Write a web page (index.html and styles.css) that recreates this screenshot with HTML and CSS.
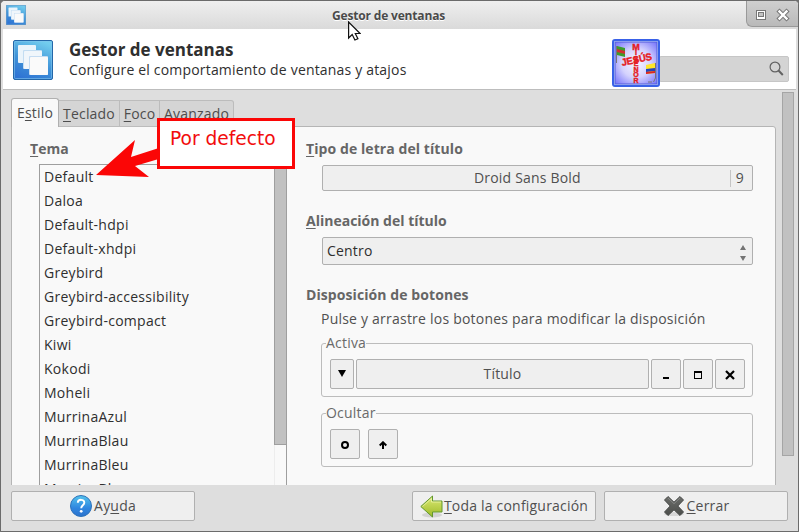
FILE: index.html
```
<!DOCTYPE html>
<html lang="es">
<head>
<meta charset="utf-8">
<title>Gestor de ventanas</title>
<link rel="stylesheet" href="styles.css">
</head>
<body>
<svg width="0" height="0" class="defs" aria-hidden="true">
  <defs>
    <linearGradient id="blue" x1="0.7" y1="0" x2="0.3" y2="1"><stop offset="0" stop-color="#72cdee"/><stop offset=".55" stop-color="#3f93d8"/><stop offset="1" stop-color="#2f74d4"/></linearGradient>
    <linearGradient id="green" x1="0" y1="0" x2="0" y2="1"><stop offset="0" stop-color="#dcea75"/><stop offset="1" stop-color="#9dba28"/></linearGradient>
    <linearGradient id="help" x1="0" y1="0" x2="0" y2="1"><stop offset="0" stop-color="#55c4ec"/><stop offset=".6" stop-color="#2f86e0"/><stop offset="1" stop-color="#2c72cc"/></linearGradient>
    <linearGradient id="grey" x1="0" y1="0" x2="0" y2="1"><stop offset="0" stop-color="#6c6e6b"/><stop offset="1" stop-color="#4b4d4a"/></linearGradient>
    <radialGradient id="badge" r=".7"><stop offset="0" stop-color="#f8f6ff"/><stop offset=".5" stop-color="#d4d2fd"/><stop offset="1" stop-color="#7471fb"/></radialGradient>
    <symbol id="windows" viewBox="0 0 40 40">
      <rect x=".5" y=".5" width="39" height="39" rx="1.5" fill="url(#blue)" stroke="#2467a8"/>
      <rect x="1.5" y="1.5" width="37" height="37" rx="1" fill="none" stroke="#7fc4ec" stroke-opacity=".6"/>
      <rect x="5" y="5" width="18" height="18" rx="1" fill="#eaf4fb"/>
      <rect x="10" y="10" width="19" height="19" rx="1" fill="#c3ddf2"/>
      <rect x="11" y="11" width="18" height="18" rx="1" fill="#f0f6fb"/>
      <rect x="16" y="16" width="19" height="19" rx="1" fill="#c5dcf2"/>
      <rect x="17" y="17" width="18" height="18" rx="1" fill="#fafafa"/>
    </symbol>
  </defs>
</svg>
<div class="window">
  <header class="titlebar">
    <svg class="app-icon" width="20" height="20"><use href="#windows"/></svg>
    <span class="window-title">Gestor de ventanas</span>
    <div class="window-controls">
      <svg width="53" height="27" viewBox="0 0 53 27">
        <rect x="12.500" y="10.500" width="9" height="9" fill="#fff" stroke="#777"/>
        <rect x="14.500" y="12.500" width="5" height="4" fill="#c4c4c4" stroke="#777"/>
        <path d="M35.500 11.500l7 7M42.500 11.500l-7 7" stroke="#777" stroke-width="4.400" stroke-linecap="square"/>
        <path d="M35.500 11.500l7 7M42.500 11.500l-7 7" stroke="#fff" stroke-width="2.400" stroke-linecap="square"/>
      </svg>
    </div>
  </header>

  <section class="banner">
    <svg class="banner-icon" width="40" height="40"><use href="#windows"/></svg>
    <div class="banner-text">
      <h1>Gestor de ventanas</h1>
      <p>Configure el comportamiento de ventanas y atajos</p>
    </div>
    <div class="search">
      <svg width="16" height="16" viewBox="0 0 16 16" fill="none" stroke="#626262"><circle cx="7" cy="6" r="4.900" stroke-width="1.200"/><path d="M10.500 9.500l4.300 4.500" stroke-width="2"/></svg>
    </div>
    <svg class="badge" width="48" height="48" viewBox="0 0 48 48">
      <rect x="1" y="1" width="46" height="46" rx="2" fill="#c5d8ff" stroke="#3961e8" stroke-width="2"/>
      <rect x="3" y="3" width="42" height="42" fill="url(#badge)" stroke="#555fd8"/>
      <path d="M4.500 7v17" stroke="#777"/><path d="M5 7l8 2v9l-8-2z" fill="#3d9b2c"/><path d="M5 10l8 2v3l-8-2z" fill="#cf3030"/>
      <path d="M43.500 24v15l-2 4M36 43h4" stroke="#777" fill="none"/><path d="M34 26l9-2v10l-9 1z" fill="#ffe629"/><path d="M34 30l9-1v3l-9 1z" fill="#2444ba"/><path d="M34 33l9-1v2l-9 1z" fill="#dc2525"/>
      <g class="badge-letters">
        <text class="badge-initial" x="24" y="10.500">M</text><text x="24" y="16">I</text><text x="24" y="21.500">S</text><text x="24" y="27">E</text><text x="24" y="32.500">N</text><text x="24" y="38">O</text><text x="24" y="43.500">R</text>
        <text class="badge-name" x="24.500" y="24" transform="rotate(-12 24 20)" textLength="31" lengthAdjust="spacingAndGlyphs">JESÚS</text>
      </g>
    </svg>
  </section>

  <main class="content">
    <div class="notebook">
      <nav class="tabs">
        <span class="tab active">E<u>s</u>tilo</span>
        <span class="tab keyboard"><u>T</u>eclado</span>
        <span class="tab focus"><u>F</u>oco</span>
        <span class="tab advanced"><u>A</u>vanzado</span>
      </nav>
      <div class="page">
        <section class="themes">
          <h2 class="theme-heading"><u>T</u>ema</h2>
          <div class="list-box">
            <ul>
              <li>Default</li><li>Daloa</li><li>Default-hdpi</li><li>Default-xhdpi</li><li>Greybird</li><li>Greybird-accessibility</li><li>Greybird-compact</li><li>Kiwi</li><li>Kokodi</li><li>Moheli</li><li>MurrinaAzul</li><li>MurrinaBlau</li><li>MurrinaBleu</li><li>MurrinaBlue</li>
            </ul>
            <div class="list-scroll"><div class="list-thumb"></div></div>
          </div>
        </section>
        <section class="options">
          <h2><u>T</u>ipo de letra del título</h2>
          <div class="font-button"><span class="font-name">Droid Sans Bold</span><span class="font-size">9</span></div>
          <h2 class="align-heading"><u>A</u>lineación del título</h2>
          <div class="combo"><span>Centro</span>
            <svg width="6" height="16" viewBox="0 0 6 16" fill="#747474"><path d="M0 5L3 0l3 5zM0 11h6l-3 5z"/></svg>
          </div>
          <h2 class="layout-heading">Disposición de botones</h2>
          <p class="hint">Pulse y arrastre los botones para modificar la disposición</p>
          <div class="frame">
            <span class="legend active-legend">Activa</span>
            <div class="button-row">
              <span class="tile menu-tile"><svg width="8" height="7" viewBox="0 0 8 7"><path d="M0 0h8L4 7z"/></svg></span>
              <span class="tile title-tile">Título</span>
              <span class="tile"><svg width="10" height="10" viewBox="0 0 10 10"><path d="M2 7h6v2H2z"/></svg></span>
              <span class="tile"><svg width="8" height="8" viewBox="0 0 8 8"><path d="M0 0h8v8H0zM1 2v5h6V2z" fill-rule="evenodd"/></svg></span>
              <span class="tile"><svg width="10" height="10" viewBox="0 0 10 10"><path d="M1 1l8 8M9 1L1 9" stroke="#000" stroke-width="2.200"/></svg></span>
            </div>
          </div>
          <div class="frame">
            <span class="legend hidden-legend">Ocultar</span>
            <div class="button-row hidden-row">
              <span class="tile"><svg width="8" height="8" viewBox="0 0 8 8"><circle cx="4" cy="4" r="3" fill="none" stroke="#000" stroke-width="2"/></svg></span>
              <span class="tile"><svg width="8" height="8" viewBox="0 0 8 8"><path d="M4 8V1.500M.700 4.500L4 1.300l3.300 3.200" fill="none" stroke="#000" stroke-width="2"/></svg></span>
            </div>
          </div>
        </section>
      </div>
    </div>
    <div class="page-scroll"><div class="page-thumb"></div></div>
  </main>

  <footer class="actions">
    <span class="action help">
      <svg width="22" height="22" viewBox="0 0 22 22"><circle cx="11" cy="11" r="10.500" fill="url(#help)" stroke="#2d72ba"/><path d="M7.800 7.700C8 3.800 14.400 3.900 14.300 7.800 14.200 10.400 11.200 10.300 11.200 13.300" fill="none" stroke="#fff" stroke-width="1.900"/><circle cx="11.200" cy="16.300" r="1.400" fill="#fff"/></svg>
      <span>Ay<u>u</u>da</span>
    </span>
    <span class="action all-settings">
      <svg width="23" height="23" viewBox="0 0 23 23"><ellipse cx="12" cy="20" rx="10" ry="2.500" fill="#d3d3d3"/><path d="M.8 11.500L12.500 1v5H22v11h-9.500v5z" fill="url(#green)" stroke="#62982f" stroke-linejoin="round"/><path d="M2.500 11.500l9-8V7H21" fill="none" stroke="#f1f6b4" stroke-opacity=".7"/></svg>
      <span><u>T</u>oda la configuración</span>
    </span>
    <span class="action close">
      <svg width="22" height="22" viewBox="0 0 22 22"><ellipse cx="11" cy="19" rx="10" ry="2" fill="#d6d6d6"/><path d="M5 1.500l6 5.700 6-5.700 3.500 3.500-5.700 6 5.700 6-3.500 3.500-6-5.700-6 5.700L1.500 17l5.700-6-5.700-6z" fill="url(#grey)" stroke="#464846" stroke-linejoin="round"/><path d="M5 3l6 5.700L17 3" fill="none" stroke="#858785"/></svg>
      <span><u>C</u>errar</span>
    </span>
  </footer>
</div>

<svg class="arrow" width="67" height="46" viewBox="0 0 67 46"><path d="M0 37L39 2l-4 17 31-10v11L39 28l14 11z" fill="#fb0606"/></svg>
<div class="callout">Por defecto</div>
<svg class="cursor" width="14" height="21" viewBox="0 0 14 21"><path d="M1.600 1v16l3.600-3.500L7.900 19l3-1.300-2.600-5.200h4.800z" fill="#fff" stroke="#111" stroke-width="1.200"/></svg>
</body>
</html>
```
FILE: styles.css
```
* { box-sizing: border-box; }
body { margin: 0; width: 799px; height: 532px; overflow: hidden; position: relative; background: #6f6f6f; color: #2f2f2f; font: 14px/20px "Open Sans", "Noto Sans", sans-serif; letter-spacing: .2px; }
h1, h2, p, ul { margin: 0; padding: 0; }
svg { display: block; flex: none; }
.defs { position: absolute; }
u { text-decoration: underline; text-decoration-thickness: 1px; text-underline-offset: 2px; text-decoration-skip-ink: none; }

.window { width: 799px; height: 532px; display: flex; flex-direction: column; border: 1px solid #6b6b6b; border-radius: 5px 5px 0 0; background: #dedede; overflow: hidden; }
.titlebar { height: 28px; flex: none; display: grid; grid-template-columns: 53px 1fr 53px; background: linear-gradient(#efefef, #dadada); }
.app-icon { margin: 4px 0 0 5px; }
.window-title { text-align: center; font-size: 12px; font-weight: 700; line-height: 29px; color: #4a4a4a; letter-spacing: -.17px; text-shadow: 0 1px #fff; padding-right: 22px; }
.window-controls { height: 26px; margin-left: 1px; background: linear-gradient(#cfcfcf, #b9b9b9); border: solid #999; border-width: 0 0 1px 1px; border-radius: 0 0 0 6px; overflow: hidden; }
.window-controls svg { margin: -1px 0 0 -3px; }

.banner { position: relative; height: 61px; flex: none; margin: 0 2px; background: #fff; border-bottom: 1px solid #bdbdbd; display: flex; }
.banner-icon { margin: 11px 0 0 10px; }
.banner-text { margin: 10px 0 0 16px; flex: 1; }
h1 { font-size: 17px; line-height: 21px; letter-spacing: 0; }
.banner-text p { line-height: 20px; letter-spacing: .18px; }
.search { width: 130px; height: 26px; margin: 27px 7px 0 0; padding: 4px 4px; display: flex; justify-content: flex-end; background: #d4d4d4; border: 1px solid #c6c6c6; border-radius: 2px; }
.badge { position: absolute; left: 609px; top: 10px; }
.badge-letters { font: 900 7px "Liberation Sans", sans-serif; fill: #e51c23; stroke: #e51c23; stroke-width: .4px; text-anchor: middle; letter-spacing: 0; }
.badge-initial { font-size: 9px; }
.badge-name { font-size: 10px; }

.content { height: 395px; flex: none; display: flex; overflow: hidden; padding-left: 10px; }
.notebook { width: 765px; padding-top: 8px; }
.tabs { height: 29px; display: flex; align-items: flex-end; position: relative; color: #4d4d4d; }
.tab { height: 27px; padding-top: 3px; text-align: center; border: 1px solid #bcbcbc; border-left: 0; background: #d5d5d5; white-space: nowrap; }
.tab.active { position: relative; z-index: 1; width: 48px; height: 29px; padding-top: 4px; border: 1px solid #b0b0b0; border-bottom: 0; border-radius: 3px 3px 0 0; background: #f9f9f9; }
.keyboard { width: 61px; }
.focus { width: 40px; }
.advanced { width: 74px; border-radius: 0 3px 0 0; }
.page { height: 400px; margin-top: -1px; display: flex; background: #f9f9f9; border: 1px solid #b5b5b5; border-radius: 0 3px 0 0; }
.themes { width: 275px; padding: 12px 0 0 18px; }
h2 { font-size: 14px; line-height: 20px; font-weight: 700; color: #666; letter-spacing: .08px; }
.align-heading { letter-spacing: 0; }
.list-box { width: 248px; height: 350px; margin: 5px 0 0 9px; border: 1px solid #9e9e9e; display: flex; justify-content: space-between; }
ul { list-style: none; padding-left: 4px; }
li { height: 24px; line-height: 24px; letter-spacing: .28px; }
.list-scroll { width: 13px; margin: -1px -1px 0 0; border-left: 1px solid #ededed; border-right: 1px solid #9e9e9e; }
.list-thumb { width: 13px; height: 281px; margin-left: -1px; background: #c1c1c1; border: 1px solid #9f9f9f; }
.options { width: 467px; padding: 12px 0 0 19px; }
.font-button { width: 431px; height: 26px; margin: 6px 0 20px 16px; padding: 3px 8px 3px 0; display: flex; align-items: center; background: #efefef; border: 1px solid #b0b0b0; border-radius: 2px; color: #505050; }
.font-name { flex: 1; text-align: center; padding-left: 2px; }
.font-size { border-left: 1px solid #c5c5c5; height: 17px; line-height: 16px; padding-left: 5px; }
.combo { width: 431px; height: 28px; margin: 6px 0 20px 16px; padding: 0 6px 0 4px; display: flex; align-items: center; justify-content: space-between; background: #efefef; border: 1px solid #b0b0b0; border-radius: 2px; }
.combo svg { margin-top: 3px; }
.hint { margin: 4px 0 0 15px; color: #505050; white-space: nowrap; letter-spacing: .22px; }
.frame { position: relative; width: 432px; height: 54px; margin: 14px 0 16px 15px; border: 1px solid #bcbcbc; border-radius: 3px; }
.legend { position: absolute; left: 4px; top: -11px; background: #f9f9f9; color: #6a6a6a; }
.button-row { display: flex; gap: 2px; padding: 15px 7px 0 8px; }
.hidden-row { gap: 8px; }
.tile { width: 30px; height: 30px; display: flex; align-items: center; justify-content: center; background: #efefef; border: 1px solid #b0b0b0; border-radius: 2px; color: #505050; }
.tile svg { margin-top: 2px; }
.menu-tile { width: 24px; }
.menu-tile svg { margin-top: -2px; }
.title-tile { flex: 1; }
.page-scroll { width: 13px; margin-left: 6px; padding-top: 2px; }
.page-thumb { width: 12px; height: 364px; background: #c1c1c1; border: 1px solid #a5a5a5; }

.actions { padding: 6px 10px; display: flex; }
.action { width: 184px; height: 30px; display: flex; align-items: center; justify-content: center; gap: 2px; background: #efefef; border: 1px solid #b0b0b0; border-radius: 2px; color: #505050; white-space: nowrap; }
.help { margin-right: 217px; }
.all-settings { margin-right: 8px; gap: 1px; }
.close { gap: 2px; }
.arrow { position: absolute; z-index: 2; left: 96px; top: 138px; }
.callout { position: absolute; z-index: 2; left: 157px; top: 118px; width: 138px; height: 51px; border: 3px solid #fb0606; background: #fff; padding: 6px 10px; color: #f20d0d; font: 18.6px/24px "DejaVu Sans", sans-serif; letter-spacing: 0; }
.cursor { position: absolute; left: 347px; top: 21px; }
```
